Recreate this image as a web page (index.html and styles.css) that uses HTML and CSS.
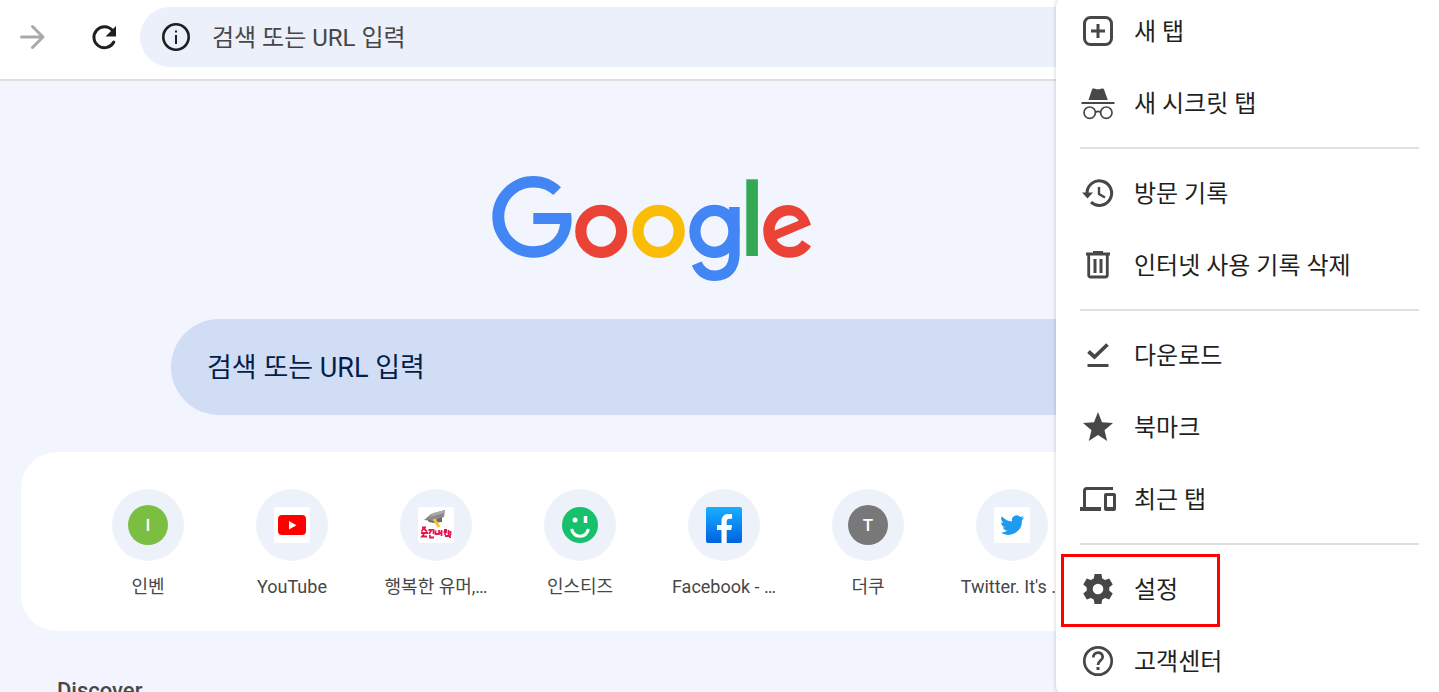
FILE: index.html
```
<!doctype html>
<html lang="ko">
<head>
    <meta charset="UTF-8">
    <meta name="viewport" content="width=device-width, initial-scale=1.0">
    <title>새 탭</title>
    <link rel="stylesheet" href="styles.css">
</head>
<body>
<header class="toolbar">
    <button class="tool forward" type="button" aria-label="앞으로" disabled>
        <svg width="28" height="28" viewBox="0 0 28 28" fill="none" stroke="#a9a9a9" stroke-width="3" stroke-linecap="round" stroke-linejoin="round"><path d="M3.500 14H25M14.500 3.500L25 14L14.500 24.500"/></svg>
    </button>
    <button class="tool" type="button" aria-label="새로고침">
        <svg width="28" height="28" viewBox="0 0 28 28"><path d="M22.500 7.500A10.500 10.500 0 1 0 23.800 19" fill="none" stroke="#1f1f1f" stroke-width="3" stroke-linecap="round"/><path d="M26 3V13.500H15.500Z" fill="#1f1f1f"/></svg>
    </button>
    <label class="address">
        <svg width="30" height="30" viewBox="0 0 30 30" aria-hidden="true"><circle cx="15" cy="15" r="12.700" fill="none" stroke="#1f1f1f" stroke-width="2.600"/><path d="M14 13h2v9h-2zM14 8.500h2v2h-2z" fill="#1f1f1f"/></svg>
        <input type="text" placeholder="검색 또는 URL 입력" aria-label="주소창">
    </label>
</header>

<main class="page">
    <svg class="logo" width="320" height="106" viewBox="0 0 320 106" role="img" aria-label="Google">
        <path fill="#4285f4" d="M69 11.300C62 4.500 52.500 0 41.300 0C19 0 .3 18.500 .3 40.800S19 81.700 41.300 81.700C53 81.700 62 77.800 69 70.600C76 63.400 79.600 53.500 79.600 44C79.600 41.500 79.400 39.200 79 37H41.300V48H68C67.300 54.500 65 59 61.300 62.800C57 67 50.500 70.200 41.300 70.200C25 70.200 12.200 57 12.200 40.800S25 11.400 41.300 11.400C50 11.400 56.500 14.500 61.300 19Z"/>
        <ellipse cx="109.200" cy="55.300" rx="20.400" ry="21" fill="none" stroke="#ea4335" stroke-width="11.200"/>
        <ellipse cx="166.600" cy="55.300" rx="20.600" ry="21" fill="none" stroke="#fbbc05" stroke-width="11.200"/>
        <g fill="none" stroke="#4285f4">
            <ellipse cx="222.400" cy="55.300" rx="19.500" ry="21" stroke-width="11.200"/>
            <path stroke-width="10.600" d="M242.400 31V77C242.400 92 235 99.700 222.500 99.700C213 99.700 207.500 94 204.700 87.500"/>
        </g>
        <rect x="254.300" y="3.300" width="11.600" height="76.700" fill="#34a853"/>
        <path fill="#ea4335" fill-rule="evenodd" d="M319 48.700C316 38.500 308.500 29 296.200 29C282 29 271.300 40.500 271.300 55.300S282.500 81.700 297.500 81.700C308 81.700 315.500 76.500 319 70.300L310 64.300C307.500 68.500 303.500 71 298 71C291.500 71 287 68 284.600 63.300ZM282.700 54.500C282.500 45 290 39.500 297 39.500C301.500 39.500 305 41.300 306.700 44.700Z"/>
    </svg>

    <input class="search" type="text" placeholder="검색 또는 URL 입력" aria-label="검색">

    <nav class="sites">
        <a class="site" href="#">
            <span class="circle"><span class="letter green">I</span></span>
            <span class="name">인벤</span>
        </a>
        <a class="site" href="#">
            <span class="circle"><svg width="36" height="36" viewBox="0 0 36 36"><rect width="36" height="36" rx="3" fill="#fff"/><rect x="4" y="8" width="28" height="20" rx="4" fill="#f00"/><path d="M15 14V22.500L22.500 18.200Z" fill="#fff"/></svg></span>
            <span class="name">YouTube</span>
        </a>
        <a class="site" href="#">
            <span class="circle"><svg width="36" height="36" viewBox="0 0 36 36">
                <rect width="36" height="36" rx="3" fill="#fff"/>
                <path d="M6 13L13 7L27 3L26 10L15 14Z" fill="#8a8a8a"/><path d="M9 12L15 14L24 10V15L16 16L11 15Z" fill="#6a6a6a"/><path d="M15 6L27 3L26 6L12 10Z" fill="#aaa"/>
                <path d="M16 12L21 20" stroke="#f5c52c" stroke-width="3"/>
                <g fill="none" stroke="#e6194f" stroke-width="1.800"><path d="M4 20.500H8M6 21L3.500 24.500M6 22L9 24.500M3 26H10M6 27L4 29.500H9"/><path d="M10.500 23H13.500L11 27M15.500 22V27M12 28V30.500H16"/><path d="M17.500 23.500V27H20M21 23V28M23.500 23V29M21 26H24"/><path d="M26 23H29M25.500 25H29M27 25V28M30.500 23V28M32.500 24V28M27 29H32V31"/></g>
            </svg></span>
            <span class="name">행복한 유머,…</span>
        </a>
        <a class="site" href="#">
            <span class="circle"><svg width="36" height="36" viewBox="0 0 36 36"><circle cx="18" cy="18" r="18" fill="#17c06b"/><circle cx="13" cy="13" r="2.500" fill="#fff"/><path d="M23.500 9V16" stroke="#fff" stroke-width="3.500"/><path d="M9.500 22C12 31.500 24 31.500 26.500 22" fill="none" stroke="#fff" stroke-width="3"/></svg></span>
            <span class="name">인스티즈</span>
        </a>
        <a class="site" href="#">
            <span class="circle"><svg width="36" height="36" viewBox="0 0 36 36"><defs><linearGradient id="fb" x2="0" y2="1"><stop stop-color="#19afff"/><stop offset="1" stop-color="#0062e0"/></linearGradient></defs><rect width="36" height="36" rx="2" fill="url(#fb)"/><path d="M15.500 36V23H11V18H15.500V14.500C15.500 9.500 18 7 22.500 7C24 7 25.500 7.200 26 7.300V11.700H23.500C21.500 11.700 20.700 12.800 20.700 14.500V18H26L25.200 23H20.700V36Z" fill="#fff"/></svg></span>
            <span class="name">Facebook - …</span>
        </a>
        <a class="site" href="#">
            <span class="circle"><span class="letter gray">T</span></span>
            <span class="name">더쿠</span>
        </a>
        <a class="site" href="#">
            <span class="circle"><svg width="36" height="36" viewBox="0 0 36 36"><rect width="36" height="36" rx="3" fill="#fff"/><path transform="translate(6.500 6.500)" fill="#1d9bf0" d="M23.600 4.100a9.700 9.700 0 0 1-2.800.8 4.900 4.900 0 0 0 2.200-2.700 9.700 9.700 0 0 1-3.100 1.200 4.900 4.900 0 0 0-8.400 4.500A13.900 13.900 0 0 1 1.400 2.700a4.900 4.900 0 0 0 1.500 6.600 4.900 4.900 0 0 1-2.200-.6 4.900 4.900 0 0 0 3.900 4.900 4.900 4.900 0 0 1-2.200.1 4.900 4.900 0 0 0 4.600 3.400A9.900 9.900 0 0 1 0 19.100a13.900 13.900 0 0 0 21.400-12.400 9.700 9.700 0 0 0 2.200-2.600z"/></svg></span>
            <span class="name">Twitter. It's …</span>
        </a>
    </nav>

    <h2 class="discover">Discover</h2>
</main>

<div class="menu">
    <button class="item" type="button">
        <svg class="icon" viewBox="0 0 36 36"><rect x="4.500" y="4.500" width="27" height="27" rx="6" fill="none" stroke="#474747" stroke-width="3"/><path d="M18 11V25M11 18H25" stroke="#474747" stroke-width="3"/></svg>
        <span>새 탭</span>
    </button>
    <button class="item" type="button">
        <svg class="icon" viewBox="0 0 36 36"><path d="M8.500 15L12 4.500C12.500 3 13.500 3.300 15 3.800C17 4.500 19 4.500 21 3.800C22.500 3.300 23.500 3 24 4.500L27.800 15Z" fill="#474747"/><path d="M1.500 18H34.500" stroke="#474747" stroke-width="2"/><g fill="none" stroke="#474747" stroke-width="1.700"><circle cx="9.700" cy="27.700" r="5.700"/><circle cx="26.300" cy="27.700" r="5.700"/><path d="M15.400 27.500C17 26 19 26 20.600 27.500"/></g></svg>
        <span>새 시크릿 탭</span>
    </button>
    <hr>
    <button class="item" type="button">
        <svg class="icon" viewBox="0 0 36 36"><path d="M7 18A12.300 12.300 0 1 1 11 27.200" fill="none" stroke="#474747" stroke-width="3"/><path d="M2 17.500H13L7.500 23.500Z" fill="#474747"/><path d="M19 12V19L25 22.500" fill="none" stroke="#474747" stroke-width="2.400"/></svg>
        <span>방문 기록</span>
    </button>
    <button class="item" type="button">
        <svg class="icon" viewBox="0 0 36 36" fill="none" stroke="#474747"><path d="M6 7H30M13 5.500H23" stroke-width="3"/><path d="M8.700 8V28Q8.700 30 10.700 30H25.300Q27.300 30 27.300 28V8" stroke-width="2.800"/><path d="M15 12V26M21 12V26" stroke-width="3"/></svg>
        <span>인터넷 사용 기록 삭제</span>
    </button>
    <hr>
    <button class="item" type="button">
        <svg class="icon" viewBox="0 0 36 36" fill="none" stroke="#474747"><path d="M8.500 14.500L14.500 20L27.500 7.500" stroke-width="3.800"/><path d="M7.500 28.500H28.500" stroke-width="3"/></svg>
        <span>다운로드</span>
    </button>
    <button class="item" type="button">
        <svg class="icon" viewBox="0 0 36 36"><path fill="#474747" d="M18 3L22 13.300L33 14.100L24.500 21.200L27.200 32L18 26.100L8.800 32L11.500 21.200L3 14.100L14 13.300Z"/></svg>
        <span>북마크</span>
    </button>
    <button class="item" type="button">
        <svg class="icon" viewBox="0 0 36 36" fill="none" stroke="#474747"><path d="M33 7.500H7Q4.500 7.500 4.500 10V28" stroke-width="3"/><path d="M0 28H21" stroke-width="4"/><path fill="#474747" stroke="none" fill-rule="evenodd" d="M26 12H34Q36 12 36 14V28Q36 30 34 30H26Q24 30 24 28V14Q24 12 26 12ZM27 15V26H33V15Z"/></svg>
        <span>최근 탭</span>
    </button>
    <hr>
    <button class="item marked" type="button">
        <svg class="icon" viewBox="0 0 36 36"><g fill="#474747"><path d="M14.500 3H21.500L22.500 9.500H13.500Z" id="tooth"/><use href="#tooth" transform="rotate(60 18 18)"/><use href="#tooth" transform="rotate(120 18 18)"/><use href="#tooth" transform="rotate(180 18 18)"/><use href="#tooth" transform="rotate(240 18 18)"/><use href="#tooth" transform="rotate(300 18 18)"/></g><circle cx="18" cy="18" r="8.300" fill="none" stroke="#474747" stroke-width="6"/></svg>
        <span>설정</span>
    </button>
    <button class="item" type="button">
        <svg class="icon" viewBox="0 0 36 36" fill="none" stroke="#474747"><circle cx="18" cy="18" r="13.700" stroke-width="2.700"/><path d="M13.300 14.500C13.300 8 22.700 8 22.700 14C22.700 17.500 18 17.800 18 22" stroke-width="2.700"/><path d="M18 24V27" stroke-width="3"/></svg>
        <span>고객센터</span>
    </button>
</div>
</body>
</html>
```
FILE: styles.css
```
*{
    box-sizing: border-box;
}
body{
    margin:0;
    height:100vh;
    overflow: hidden;
    position: relative;
    background-color: #f2f5fd;
    font-family: Roboto, "Noto Sans CJK KR", sans-serif;
}
button,input{
    font-family: inherit;
    border:0;
    background: none;
}
svg{
    display: block;
    flex-shrink: 0;
}

/* toolbar */
.toolbar{
    display: flex;
    align-items: center;
    height:81px;
    padding:0 0 6px 18px;
    background-color: #fff;
    border-bottom:2px solid #e0e0e0;
}
.tool{
    width:28px;
    padding:0;
    margin-right:44px;
}
.tool + .tool{
    margin-right:22px;
}
.address{
    flex:1;
    display: flex;
    align-items: center;
    gap:21px;
    height:60px;
    padding-left:21px;
    border-radius:30px 0 0 30px;
    background-color: #ecf0fa;
}
.address input{
    flex:1;
    padding:2px 0 0;
    font-size:24px;
}
.address input::placeholder{
    color:#474747;
}

/* new tab page */
.page{
    padding:95px 135px 0 0;
}
.logo{
    margin:0 auto;
}
.search{
    display: block;
    width:calc(100% - 342px);
    height:96px;
    margin:37px auto;
    padding:2px 36px 0;
    border-radius:48px;
    background-color: #d1ddf5;
    font-size:27px;
}
.search::placeholder{
    color:#041e49;
}
.sites{
    display: grid;
    grid-template-columns: repeat(8, 144px);
    justify-content: center;
    margin:0 21px;
    padding:37px 0 30px;
    border-radius:36px;
    background-color: #fff;
}
.site{
    display: flex;
    flex-direction: column;
    align-items: center;
    gap:12px;
    color:#474747;
    text-decoration: none;
}
.circle{
    display: flex;
    align-items: center;
    justify-content: center;
    width:72px;
    height:72px;
    border-radius:50%;
    background-color: #edf2fa;
}
.letter{
    width:40px;
    height:40px;
    border-radius:50%;
    color:#fff;
    font-size:17px;
    font-weight: 500;
    line-height:40px;
    text-align: center;
}
.green{
    background-color: #7bbf42;
}
.gray{
    background-color: #787878;
}
.name{
    font-size:18px;
    line-height:28px;
    white-space: nowrap;
}
.discover{
    margin:46px 57px 0;
    color:#474747;
    font-size:22px;
    font-weight: 500;
    line-height:28px;
}

/* overflow menu, lies over the page */
.menu{
    position: absolute;
    top:-5px;
    right:0;
    width:383px;
    border-radius:12px 0 0 12px;
    background-color: #fff;
    box-shadow: 0 0 4px rgba(0,0,0,.2);
}
.menu hr{
    height:2px;
    margin:8px 20px 8px 24px;
    border:0;
    background-color: #e0e0e0;
}
.item{
    position: relative;
    display: flex;
    align-items: center;
    gap:18px;
    width:100%;
    height:72px;
    padding:0 24px;
    color:#1f1f1f;
    font-size:24px;
    text-align: left;
}
.item span{
    padding-bottom:4px;
}
.icon{
    width:36px;
    height:36px;
}
.marked::after{
    content:"";
    position: absolute;
    top:1px;
    left:5px;
    width:153px;
    height:67px;
    border:3px solid #f00;
}
```
